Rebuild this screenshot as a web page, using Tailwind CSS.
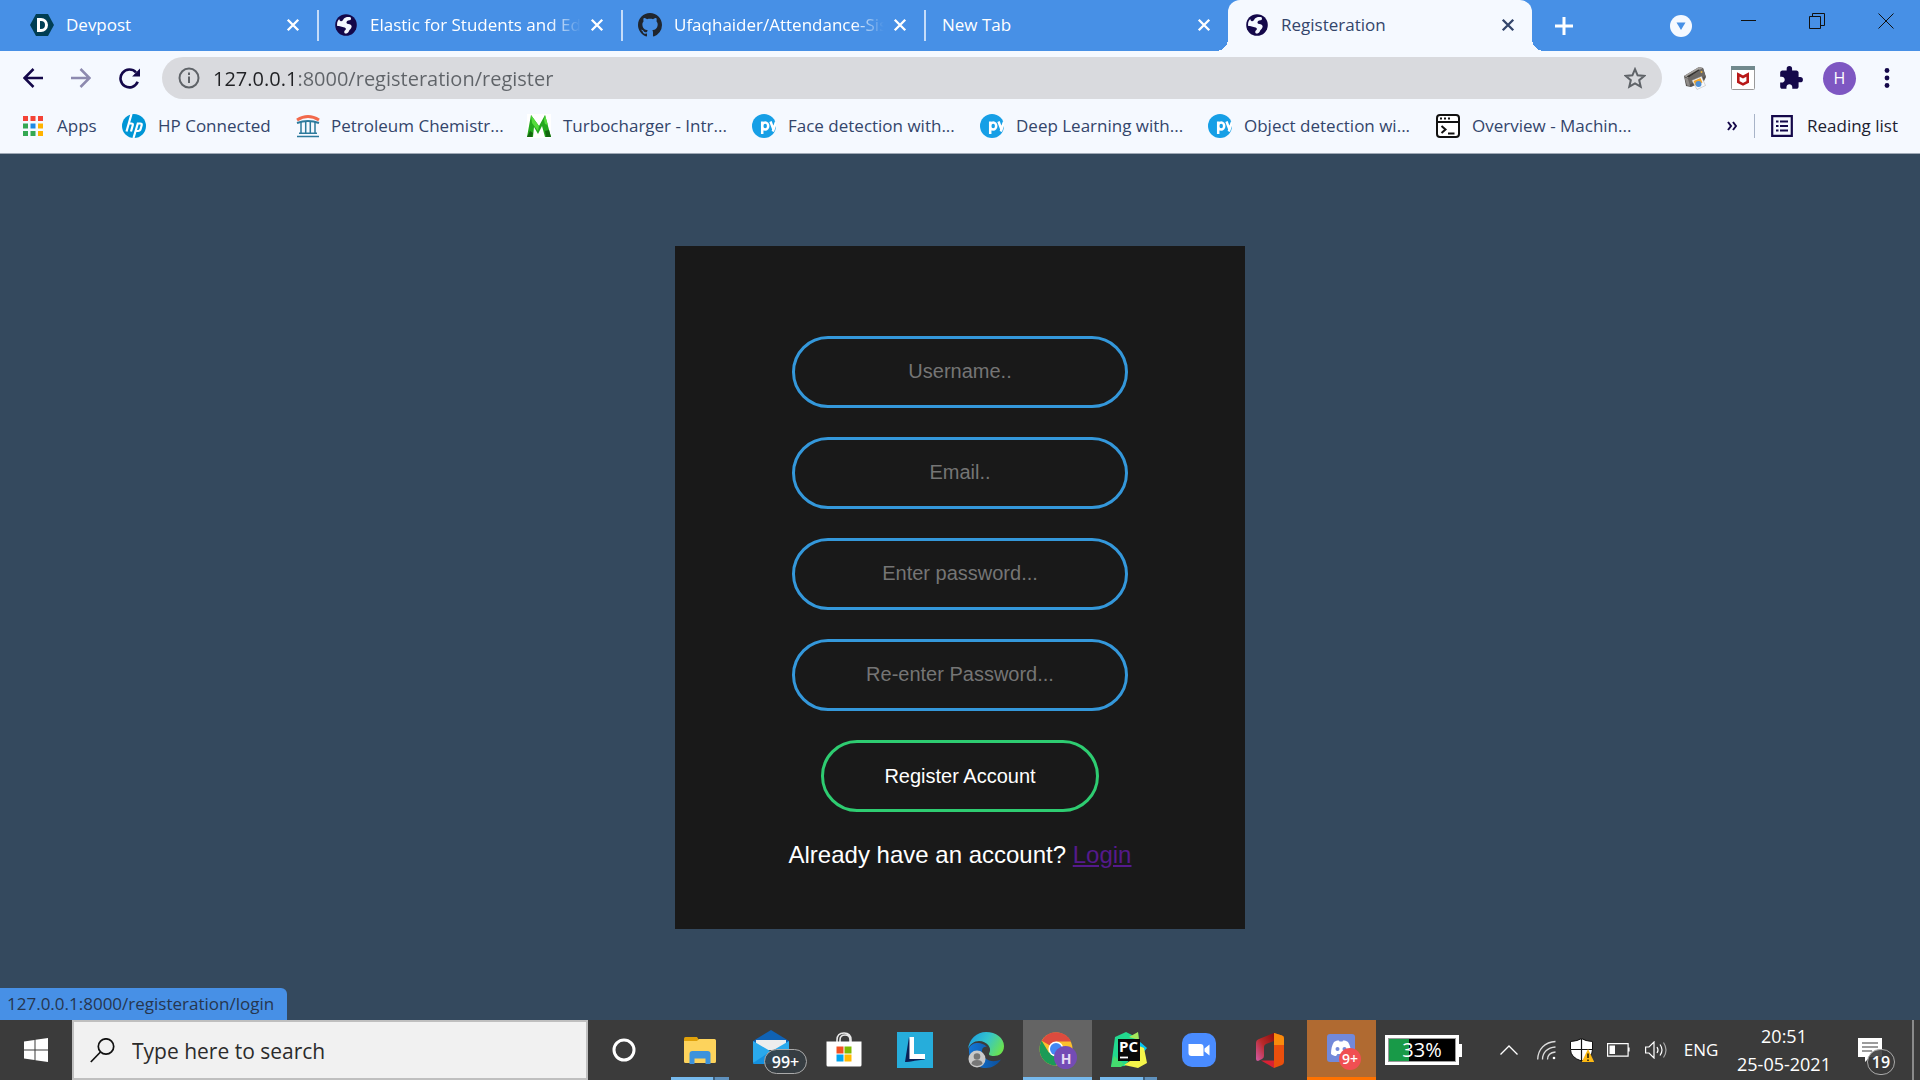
<!DOCTYPE html>
<html lang="en">
<head>
    <meta charset="utf-8" />
    <meta name="viewport" content="width=device-width, initial-scale=1" />
    <title>Registeration</title>
    <script src="https://cdn.jsdelivr.net/npm/@tailwindcss/browser@4"></script>
</head>
<body class="flex flex-col min-h-screen bg-[#34495e] font-['Open_Sans',sans-serif] text-base text-[#33456b]">

    <!-- Shared icons -->
    <svg class="hidden">
        <symbol id="i-close" viewBox="0 0 12 12"><path d="M1.500 1.500l9 9M10.500 1.500l-9 9" stroke="currentColor" stroke-width="2" fill="none" /></symbol>
        <symbol id="i-globe" viewBox="0 0 24 24">
            <circle cx="12" cy="12" r="10.800" fill="#14084a" />
            <path d="M10 5.500C11 4 14 3.500 16.500 4.200 17.500 5.500 17 7 15.500 7.300 13.500 7.500 12.200 8.500 12.500 10c.5 1.300 3 .8 4.200 1.800 1.500 1.200 1 2.600.2 3.700-.8 1-1.400 1.200-2 2.700-.6 1.500-1.800 2.300-3.900 2.300-1.200-.8-1-2.500.4-3.500 1-.8.600-2-.8-2.500C8 13.700 5.500 13 3.200 13c-.5-2.800.3-5.200 2-7 .3 1.300.8 2.500 2.200 2.200C8.800 7.900 9.200 6.600 10 5.500z" fill="#f5f9ff" />
        </symbol>
        <symbol id="i-py" viewBox="0 0 24 24">
            <circle cx="12" cy="12" r="12" fill="#169fe6" />
            <path d="M10.200 20V7.500M10.200 12a3 3.600 0 1 0 6 0 3 3.600 0 1 0-6 0M18.500 7.500l3 8M24 8l-3.200 9.500" stroke="#fff" stroke-width="2.500" fill="none" />
        </symbol>
    </svg>

    <!-- Tab strip -->
    <header class="flex h-[51px] bg-[#4790e6] pl-[15px] text-[17px] text-white">
        <div class="flex w-[304px] items-center border-r-2 border-[#b9d5f8] pb-[2px] pl-[15px] pr-3 [border-image:linear-gradient(transparent_20%,#c5dcf9_20%,#c5dcf9_80%,transparent_80%)_1]">
            <svg class="w-6 h-6 mr-3 shrink-0" viewBox="0 0 24 24">
                <path d="M6 1h12l6 11-6 11H6L0 12z" fill="#003e54" />
                <path d="M8.500 6.500v11h2.500a5.500 5.500 0 0 0 0-11z" fill="none" stroke="#fff" stroke-width="3" />
            </svg>
            <a href="#" class="flex-1 overflow-hidden whitespace-nowrap">Devpost</a>
            <button aria-label="Close tab" class="grid place-items-center w-6 h-6"><svg class="w-[14px] h-[14px]"><use href="#i-close" /></svg></button>
        </div>
        <div class="flex w-[304px] items-center border-r-2 border-[#b9d5f8] pb-[2px] pl-[15px] pr-3 [border-image:linear-gradient(transparent_20%,#c5dcf9_20%,#c5dcf9_80%,transparent_80%)_1]">
            <svg class="w-6 h-6 mr-3 shrink-0"><use href="#i-globe" /></svg>
            <a href="#" class="flex-1 overflow-hidden whitespace-nowrap mr-1 [mask-image:linear-gradient(to_right,black_85%,transparent)]">Elastic for Students and Educators</a>
            <button aria-label="Close tab" class="grid place-items-center w-6 h-6"><svg class="w-[14px] h-[14px]"><use href="#i-close" /></svg></button>
        </div>
        <div class="flex w-[303px] items-center border-r-2 border-[#b9d5f8] pb-[2px] pl-[15px] pr-3 [border-image:linear-gradient(transparent_20%,#c5dcf9_20%,#c5dcf9_80%,transparent_80%)_1]">
            <svg class="w-6 h-6 mr-3 shrink-0" viewBox="0 0 16 16"><path fill="#20262e" d="M8 0C3.580 0 0 3.580 0 8c0 3.540 2.290 6.530 5.470 7.590.4.070.55-.17.55-.38 0-.19-.01-.82-.01-1.490-2.010.37-2.530-.49-2.690-.94-.09-.23-.48-.94-.82-1.130-.28-.15-.68-.52-.01-.53.63-.01 1.080.58 1.230.82.72 1.210 1.870.87 2.330.66.07-.52.28-.87.51-1.070-1.780-.2-3.640-.89-3.640-3.950 0-.87.31-1.590.82-2.150-.08-.2-.36-1.020.08-2.120 0 0 .67-.21 2.200.82.64-.18 1.320-.27 2-.27s1.360.09 2 .27c1.530-1.040 2.200-.82 2.200-.82.44 1.100.16 1.920.08 2.120.51.56.82 1.270.82 2.150 0 3.070-1.870 3.750-3.650 3.950.29.25.54.73.54 1.480 0 1.070-.01 1.930-.01 2.200 0 .21.15.46.55.38A8.010 8.010 0 0 0 16 8c0-4.420-3.580-8-8-8z" /></svg>
            <a href="#" class="flex-1 overflow-hidden whitespace-nowrap mr-1 [mask-image:linear-gradient(to_right,black_85%,transparent)]">Ufaqhaider/Attendance-Sistem</a>
            <button aria-label="Close tab" class="grid place-items-center w-6 h-6"><svg class="w-[14px] h-[14px]"><use href="#i-close" /></svg></button>
        </div>
        <div class="flex w-[302px] items-center pb-[2px] pl-4 pr-3">
            <a href="#" class="flex-1 whitespace-nowrap">New Tab</a>
            <button aria-label="Close tab" class="grid place-items-center w-6 h-6"><svg class="w-[14px] h-[14px]"><use href="#i-close" /></svg></button>
        </div>
        <div class="relative flex w-[304px] items-center rounded-t-xl bg-[#f5f9ff] pb-[2px] pl-[17px] pr-3 text-[#33456b]">
            <span class="absolute bottom-0 -left-3 w-3 h-3 bg-[radial-gradient(circle_at_0_0,transparent_12px,#f5f9ff_12px)]"></span>
            <span class="absolute bottom-0 -right-3 w-3 h-3 bg-[radial-gradient(circle_at_100%_0,transparent_12px,#f5f9ff_12px)]"></span>
            <svg class="w-6 h-6 mr-3 shrink-0"><use href="#i-globe" /></svg>
            <a href="#" class="flex-1 whitespace-nowrap">Registeration</a>
            <button aria-label="Close tab" class="grid place-items-center w-6 h-6"><svg class="w-[14px] h-[14px]"><use href="#i-close" /></svg></button>
        </div>
        <button aria-label="New tab" class="ml-[18px] grid w-7 place-items-center"><svg class="w-[18px] h-[18px]" viewBox="0 0 18 18"><path d="M9 0v18M0 9h18" stroke="#fff" stroke-width="3" /></svg></button>
        <div class="ml-auto flex">
            <button aria-label="Search tabs" class="grid w-16 place-items-center"><svg class="w-[22px] h-[22px]" viewBox="0 0 22 22"><circle cx="11" cy="11" r="11" fill="#f5f9ff" /><path d="M6.500 7.500h9L11 15z" fill="#4790e6" /></svg></button>
            <button aria-label="Minimize" class="grid h-[42px] w-[69px] place-items-center"><svg class="w-4 h-4" viewBox="0 0 16 16"><path d="M1 7.500h15" stroke="#111" /></svg></button>
            <button aria-label="Restore" class="grid h-[42px] w-[69px] place-items-center"><svg class="w-4 h-4" viewBox="0 0 16 16"><path d="M.5 3.500h11v12H.5zM3.500 3.500v-3h12v12h-4" fill="none" stroke="#111" /></svg></button>
            <button aria-label="Close" class="grid h-[42px] w-[69px] place-items-center"><svg class="w-4 h-4" viewBox="0 0 16 16"><path d="M.5.5l15 15M15.500.5l-15 15" stroke="#111" /></svg></button>
        </div>
    </header>

    <!-- Toolbar -->
    <nav class="flex items-center bg-[#f5f9ff] pt-[6px] pl-[9px] pr-[10px] text-[#14084a]">
        <button aria-label="Back" class="grid w-12 place-items-center"><svg class="w-5 h-5" viewBox="0 0 20 20"><path d="M20 10H2M10.500 1L1.500 10l9 9" fill="none" stroke="currentColor" stroke-width="2.500" /></svg></button>
        <button aria-label="Forward" class="grid w-12 place-items-center text-[#8d8aaf]"><svg class="w-5 h-5" viewBox="0 0 20 20"><path d="M0 10h18M9.500 1l9 9-9 9" fill="none" stroke="currentColor" stroke-width="2.500" /></svg></button>
        <button aria-label="Reload" class="grid w-12 place-items-center"><svg class="w-[21px] h-[21px]" viewBox="0 0 20 20"><path d="M17.800 13.200A8.500 8.500 0 1 1 16.200 4.200" fill="none" stroke="currentColor" stroke-width="2.500" /><path d="M20 .5V8h-7.500z" fill="currentColor" /></svg></button>
        <div class="ml-[9px] flex h-[42px] flex-1 items-center rounded-full bg-[#d9dade] pl-4 pr-4 text-[#5f6368]">
            <svg class="mr-[13px] w-[22px] h-[22px] shrink-0" viewBox="0 0 22 22"><circle cx="11" cy="11" r="9.500" fill="none" stroke="currentColor" stroke-width="2" /><path d="M11 9.500V16M11 5.500V8" stroke="currentColor" stroke-width="2" /></svg>
            <!-- host part of the address is darker than the path -->
            <input type="text" aria-label="Address" value="127.0.0.1:8000/registeration/register" class="h-8 flex-1 bg-[linear-gradient(to_right,#202124_84px,#5f6368_84px)] bg-clip-text text-xl text-transparent outline-none" />
            <button aria-label="Bookmark this tab"><svg class="w-[22px] h-[22px]" viewBox="0 0 22 22"><path d="M11 2.200l2.600 6.100 6.600.6-5 4.300 1.500 6.500-5.700-3.400-5.700 3.400 1.500-6.500-5-4.300 6.600-.6z" fill="none" stroke="currentColor" stroke-width="2" /></svg></button>
        </div>
        <div class="ml-[9px] flex items-center">
            <button aria-label="Printer extension" class="grid w-12 place-items-center">
                <svg class="w-6 h-6" viewBox="0 0 24 24"><path d="M1 10L16 1l4 1 3 9-2 4L8 21l-5-1z" fill="#55524f" /><path d="M1 10L16 1l4 1L5 12z" fill="#a5a29e" /><path d="M3.500 10.500L15.500 3.500l2 .5L6 11.500z" fill="#373532" /><path d="M5 12L20 2l2.500 8L6 19z" fill="#6b6865" /><path d="M1.500 11.500l3.500 1 2 7.500-3-.5z" fill="#8f8c89" /><path d="M9 14.500l9.500-4 4 9-8.500 4z" fill="#fafafa" stroke="#aaa" stroke-width=".5" /><path d="M10.500 15l7-3 2 4.500-7 3z" fill="#f0a52c" /><circle cx="15.500" cy="18" r="3" fill="#4d8fd6" /><circle cx="18.500" cy="6" r="1" fill="#e8b23d" /></svg>
            </button>
            <button aria-label="McAfee" class="grid w-12 place-items-center">
                <svg class="w-6 h-6" viewBox="0 0 24 24"><rect x=".5" y=".5" width="23" height="23" rx="1" fill="#fff" stroke="#9a9a9a" /><path d="M0 0h24v4H0z" fill="#71898d" /><path d="M7.300 8.500l4.700 2.500 4.700-2.500v7.500L12 18.300 7.300 16z" fill="none" stroke="#b81818" stroke-width="2.600" /><path d="M9 6.500h6L12 8.500z" fill="#fff" /></svg>
            </button>
            <button aria-label="Extensions" class="grid w-12 place-items-center">
                <svg class="w-[26px] h-[26px]" viewBox="0 0 24 24"><path fill="currentColor" d="M20.500 11H19V7c0-1.100-.9-2-2-2h-4V3.500a2.500 2.500 0 0 0-5 0V5H4c-1.100 0-1.990.9-1.990 2v3.800H3.500c1.490 0 2.700 1.210 2.700 2.700s-1.210 2.700-2.700 2.700H2V20c0 1.100.9 2 2 2h3.800v-1.500c0-1.490 1.210-2.700 2.700-2.700 1.490 0 2.700 1.210 2.700 2.700V22H17c1.100 0 2-.9 2-2v-4h1.500a2.500 2.500 0 0 0 0-5z" /></svg>
            </button>
            <button aria-label="Profile" class="mx-2 grid h-[33px] w-[33px] place-items-center rounded-full bg-[#7e57c2] text-base text-white">H</button>
            <button aria-label="Menu" class="grid w-[46px] place-items-center"><svg class="w-5 h-5" viewBox="0 0 20 20" fill="currentColor"><circle cx="10" cy="2.500" r="2.400" /><circle cx="10" cy="10" r="2.400" /><circle cx="10" cy="17.500" r="2.400" /></svg></button>
        </div>
    </nav>

    <!-- Bookmarks -->
    <nav class="flex h-[55px] items-center border-b border-[#9fa9b6] bg-[#f5f9ff] pl-[23px] pr-[22px] text-[17px] whitespace-nowrap">
        <a href="#" class="flex w-[99px] items-center gap-[14px]">
            <svg class="w-5 h-5 shrink-0" viewBox="0 0 20 20"><path d="M0 0h5v5H0zM7.500 0h5v5h-5zM15 0h5v5h-5z" fill="#f44336" /><path d="M0 7.500h5v5H0zM0 15h5v5H0zM7.500 15h5v5h-5z" fill="#34a853" /><path d="M7.500 7.500h5v5h-5z" fill="#1e88e5" /><path d="M15 7.500h5v5h-5zM15 15h5v5h-5z" fill="#ffb300" /></svg>
            Apps
        </a>
        <a href="#" class="flex w-[174px] items-center gap-3">
            <svg class="w-6 h-6 shrink-0" viewBox="0 0 24 24"><circle cx="12" cy="12" r="12" fill="#0096d6" /><path d="M9.500 0L4.500 17.500M6.800 9.500h2.500q2 0 1.400 2L9 17.500M11.500 24l4.300-14.500h2.400q2 0 1.400 2l-1 3.500q-.6 2-2.600 2h-2.500" fill="none" stroke="#fff" stroke-width="2.200" /></svg>
            HP Connected
        </a>
        <a href="#" class="flex w-[231px] items-center gap-[11px]">
            <svg class="w-6 h-6 shrink-0" viewBox="0 0 24 24"><path d="M1 6q11-7 22 0" fill="none" stroke="#f2694b" stroke-width="3" /><path d="M1 9q11-4 22 0" fill="none" stroke="#2c7a9c" stroke-width="2" /><path d="M5 8v11M9.700 7v12M14.300 7v12M19 8v11M3 19.300h18M1 22.500h22" fill="none" stroke="#2c7a9c" stroke-width="1.500" /></svg>
            Petroleum Chemistr...
        </a>
        <a href="#" class="flex w-[225px] items-center gap-3">
            <svg class="w-6 h-6 shrink-0" viewBox="0 0 24 24"><path d="M0 0h24v24H0z" fill="#fff" /><path d="M0 23L4 1l8 11 6-11 6 22h-6l-3-11-4 8-4-7-1 10z" fill="#24a81e" /><path d="M4 1l8 11-1 5-6-8zM18 1l3 10-3-1-1-4z" fill="#55dc3c" /><path d="M0 23l3-6 3 2-1 4zM18 17l4-1 2 7h-5z" fill="#14670f" /></svg>
            Turbocharger - Intr...
        </a>
        <a href="#" class="flex w-[228px] items-center gap-3"><svg class="w-6 h-6 shrink-0"><use href="#i-py" /></svg>Face detection with...</a>
        <a href="#" class="flex w-[228px] items-center gap-3"><svg class="w-6 h-6 shrink-0"><use href="#i-py" /></svg>Deep Learning with...</a>
        <a href="#" class="flex w-[228px] items-center gap-3"><svg class="w-6 h-6 shrink-0"><use href="#i-py" /></svg>Object detection wi...</a>
        <a href="#" class="flex items-center gap-3">
            <svg class="w-6 h-6 shrink-0" viewBox="0 0 24 24"><rect x="1" y="1" width="22" height="22" rx="3" fill="#fff" stroke="#111" stroke-width="2" /><path d="M1 8h22M5.500 12l4 3.500-4 3.500M12 19.500h6.500" fill="none" stroke="#111" stroke-width="2" /><path d="M4 4.500h2M8 4.500h2M12 4.500h2" stroke="#111" stroke-width="2" /></svg>
            Overview - Machin...
        </a>
        <button aria-label="More bookmarks" class="ml-auto grid w-9 h-6 place-items-center border-r border-[#a8b4c8] pr-[9px] text-[#14084a]"><svg class="w-[10px] h-[10px]" viewBox="0 0 10 10"><path d="M1 1l3 4-3 4M6 1l3 4-3 4" fill="none" stroke="currentColor" stroke-width="2" /></svg></button>
        <button class="ml-4 flex items-center gap-[14px] text-[#1c2030]">
            <svg class="w-[22px] h-[22px]" viewBox="0 0 22 22"><path d="M1.200 1.200h19.600v19.600H1.200z" fill="none" stroke="#14084a" stroke-width="2.200" /><path d="M5 6.500h2.500M5 11h2.500M5 15.500h2.500M9 6.500h8M9 11h8M9 15.500h8" stroke="#14084a" stroke-width="2.200" /></svg>
            Reading list
        </button>
    </nav>

    <!-- Register page -->
    <main class="relative flex flex-1 items-center justify-center font-['Liberation_Sans',Arial,sans-serif]">
        <form class="flex w-[570px] flex-col items-center gap-[29px] bg-[#191919] pt-[90px] pb-[60px]">
            <input type="text" aria-label="Username" placeholder="Username.." class="h-[72px] w-[336px] rounded-full border-3 border-[#3498db] bg-transparent text-center text-xl text-white placeholder:text-[#757575]" />
            <input type="email" aria-label="Email" placeholder="Email.." class="h-[72px] w-[336px] rounded-full border-3 border-[#3498db] bg-transparent text-center text-xl text-white placeholder:text-[#757575]" />
            <input type="password" aria-label="Password" placeholder="Enter password..." class="h-[72px] w-[336px] rounded-full border-3 border-[#3498db] bg-transparent text-center text-xl text-white placeholder:text-[#757575]" />
            <input type="password" aria-label="Re-enter password" placeholder="Re-enter Password..." class="h-[72px] w-[336px] rounded-full border-3 border-[#3498db] bg-transparent text-center text-xl text-white placeholder:text-[#757575]" />
            <button type="submit" class="h-[72px] w-[278px] rounded-full border-3 border-[#2ecc71] text-xl text-white">Register Account</button>
            <p class="text-2xl leading-7 text-white">Already have an account? <a href="#" class="text-[#551a8b] underline">Login</a></p>
        </form>
        <div class="absolute bottom-0 left-0 flex h-8 items-center rounded-tr-md bg-[#4790e6] pl-[7px] pr-[13px] font-['Open_Sans',sans-serif] text-[17px] text-[#26364f]">127.0.0.1:8000/registeration/login</div>
    </main>

    <!-- Taskbar -->
    <footer class="flex h-[60px] bg-[#3b3b3b] text-white">
        <button aria-label="Start" class="grid w-[72px] place-items-center"><svg class="w-6 h-6" viewBox="0 0 24 24" fill="#fff"><path d="M0 3.500L10.500 2v9.500H0zM11.500 1.800L24 0v11.500H11.500zM0 12.500h10.500V22L0 20.500zM11.500 12.500H24V24l-12.500-1.800z" /></svg></button>
        <label class="flex w-[516px] items-center gap-[17px] border-2 border-[#bfbfbf] bg-[#f1f1f1] pl-4 text-black">
            <svg class="w-[25px] h-[25px] shrink-0" viewBox="0 0 25 25"><circle cx="16" cy="8.500" r="7.700" fill="none" stroke="#111" stroke-width="1.700" /><path d="M10.500 14L.8 24" stroke="#111" stroke-width="1.700" /></svg>
            <input type="text" aria-label="Search" placeholder="Type here to search" class="w-full bg-transparent pt-1 text-[21px] outline-none placeholder:text-[#2b2b2b]" />
        </label>
        <button aria-label="Cortana" class="grid w-[72px] place-items-center"><svg class="w-6 h-6" viewBox="0 0 24 24"><circle cx="12" cy="12" r="10" fill="none" stroke="#fff" stroke-width="3" /></svg></button>
        <div class="ml-2 flex gap-[2px]">
            <button aria-label="File Explorer" class="relative grid w-[69px] place-items-center pr-[5px]">
                <svg class="w-8 h-[27px]" viewBox="0 0 32 27"><path d="M0 1.500Q0 0 1.500 0H13l2 3v4H0z" fill="#e0a10a" /><path d="M0 4h13l2-2h15.500Q32 2 32 3.500v21q0 1.500-1.500 1.500h-29Q0 26 0 24.500z" fill="#fdd35c" /><path d="M5.500 27V17q0-3 3-3h15q3 0 3 3v10h-5v-5.500h-11V27z" fill="#3c92dd" /></svg>
                <span class="absolute bottom-0 left-[3px] flex h-[3px] w-[58px] bg-[#5f91bd]"><span class="w-11 border-r-2 border-[#3f5f7c] bg-[#76b9ed]"></span></span>
            </button>
            <button aria-label="Mail" class="relative grid w-[69px] place-items-center pr-[5px] pb-[6px]">
                <svg class="w-9 h-[34px]" viewBox="0 0 36 34"><path d="M0 11L18 0l18 11v4H0z" fill="#0f62b5" /><path d="M3 10h30v10H3z" fill="#ededed" /><path d="M0 11l18 10.500L36 11v21q0 2-2 2H2q-2 0-2-2z" fill="#2aa9ec" /><path d="M0 33l18-12 18 12q0 1-2 1H2q-2 0-2-1z" fill="#1490df" /></svg>
                <span class="absolute left-[25px] top-[29px] grid h-[25px] w-[43px] place-items-center rounded-full border border-[#aaa] bg-[#363e44]/90 text-base font-semibold">99+</span>
            </button>
            <button aria-label="Store" class="grid w-[69px] place-items-center pb-[2px] pr-[2px]">
                <svg class="w-9 h-[35px]" viewBox="0 0 36 35"><path d="M11 10V8q0-7 7-7t7 7v2M14 10V8q0-5 5-5t5 5v2" fill="none" stroke="#e8e8e8" stroke-width="1.600" /><path d="M.5 9.500h35V33q0 1.500-1.500 1.500H2Q.5 34.500.5 33z" fill="#fff" /><path d="M10.500 14.500h7v7h-7z" fill="#f25022" /><path d="M18.500 14.500h7v7h-7z" fill="#7fba00" /><path d="M10.500 22.500h7v7h-7z" fill="#00a4ef" /><path d="M18.500 22.500h7v7h-7z" fill="#ffb900" /></svg>
            </button>
            <button aria-label="Lenovo" class="grid w-[69px] place-items-center pr-[2px]">
                <svg class="w-9 h-9" viewBox="0 0 36 36"><path d="M0 0h36v36H0z" fill="#26addb" /><path d="M12 5L8 30l9-1V22z" fill="#0b1f55" /><path d="M8 30l5-3.500h15l-.5 1z" fill="#0b1f55" /><path d="M12.500 5h4.500v17h11v5H12.500z" fill="#fff" /></svg>
            </button>
            <button aria-label="Edge" class="grid w-[69px] place-items-center pr-[2px]">
                <svg class="w-9 h-9" viewBox="0 0 36 36">
                    <defs>
                        <linearGradient id="edgeTop" x1="0" x2="1" y1=".2" y2=".6"><stop offset="0" stop-color="#1a9de2" /><stop offset=".5" stop-color="#35c5cb" /><stop offset="1" stop-color="#6be24f" /></linearGradient>
                        <linearGradient id="edgeSide" x1="0" x2="1"><stop offset="0" stop-color="#1476d6" /><stop offset="1" stop-color="#0c4f9a" /></linearGradient>
                    </defs>
                    <path d="M1 16C5 8 16 11 19 15c-5-1-6 4-4 8 3 6 10 8 18 4.500C29 33 24 36 18 36 8 36 0 28 1 16z" fill="url(#edgeSide)" />
                    <path d="M0 17C1 7 9 0 18 0c10 0 18 6 18 14 0 7-5 10-10 10-4 0-6-1-4.500-3.500C24 16 19 9 11 9 6 9 2 12 0 17z" fill="url(#edgeTop)" />
                    <circle cx="9" cy="27" r="8.500" fill="#c9c9c9" /><circle cx="9" cy="24.500" r="3.300" fill="#777" /><path d="M3.500 32q0-4 5.500-4t5.500 4q-5.500 4-11 0z" fill="#777" />
                </svg>
            </button>
            <button aria-label="Chrome" class="relative grid w-[69px] place-items-center bg-[#646464]">
                <svg class="w-[38px] h-[38px]" viewBox="0 0 38 38"><circle cx="17" cy="18" r="16.500" fill="#fbc02d" /><path d="M17 18L2.700 9.800A16.500 16.500 0 0 1 32 10.500L17 10.500z" fill="#dd4b3e" /><path d="M17 18L9.800 21.500 2.700 9.800A16.500 16.500 0 0 0 17 34.500l7-12z" fill="#1b9b57" /><circle cx="17" cy="18" r="7.600" fill="#fff" /><circle cx="17" cy="18" r="6" fill="#4387f4" /><circle cx="26.500" cy="26.500" r="11.500" fill="#744cb5" /></svg>
                <span class="absolute left-[31px] top-[27px] grid w-6 h-6 place-items-center text-sm font-bold text-[#e6dcf5]">H</span>
                <span class="absolute bottom-0 left-0 h-[3px] w-full bg-[#76b9ed]"></span>
            </button>
            <button aria-label="PyCharm" class="relative grid w-[69px] place-items-center">
                <svg class="w-9 h-9" viewBox="0 0 36 36"><path d="M4 5L15 0l10 5 2-5 1 14L14 34 0 35z" fill="#22d88f" /><path d="M18 5l9-5 1 8z" fill="#a4e85a" /><path d="M28 9l8 7-4 5-5-3z" fill="#07c3f2" /><path d="M28 14l5 2 3 15-9 5-14-3 12-8z" fill="#f5f54a" /><path d="M0 35l3-11 10 8-3 3z" fill="#45dd6f" /><path d="M7 7h22v22H7z" fill="#090909" /><path d="M9 25.500h8" stroke="#fff" stroke-width="1.800" /></svg>
                <span class="absolute left-[25px] top-[18px] text-[15px] leading-[17px] font-bold">PC</span>
                <span class="absolute bottom-0 left-[6px] flex h-[3px] w-[57px] bg-[#5f91bd]"><span class="w-[45px] border-r-2 border-[#3f5f7c] bg-[#76b9ed]"></span></span>
            </button>
            <button aria-label="Zoom" class="grid w-[69px] place-items-center pr-[2px]">
                <svg class="w-[34px] h-[34px]" viewBox="0 0 34 34"><rect width="34" height="34" rx="10" fill="#4a8cff" /><path d="M6.500 11h12q3 0 3 3v9h-12q-3 0-3-3zM22.500 15.500l5-4v11l-5-4z" fill="#fff" /></svg>
            </button>
            <button aria-label="Office" class="grid w-[69px] place-items-center pr-[2px]">
                <svg class="w-7 h-[35px]" viewBox="0 0 28 35">
                    <defs><linearGradient id="office" x1="1" x2="0" y1="0" y2="1"><stop offset="0" stop-color="#8c0f0f" /><stop offset=".5" stop-color="#b92a2a" /><stop offset="1" stop-color="#d45ba8" /></linearGradient></defs>
                    <path d="M18 0v8l-8 3q-2 1-2 3v9q0 2-2 3l-4 2q-2 0-2-2V10q0-3 3-4z" fill="url(#office)" /><path d="M18 0l8 2.500q2 .7 2 3v23.500q0 2-2 3L18 35z" fill="#ea4f0c" /><path d="M18 0l8 2.500q2 .7 2 3V12H18z" fill="#f98b0c" /><path d="M5 27.500h13V35z" fill="#d92133" />
                </svg>
            </button>
            <button aria-label="Discord" class="relative grid w-[69px] place-items-center border-b-3 border-[#ff7200] bg-[#b06a31] pr-[2px]">
                <svg class="w-7 h-[29px]" viewBox="0 0 28 29"><rect width="28" height="28" rx="3" fill="#7289da" /><path d="M20 26h8v3z" fill="#7289da" /><path d="M4 20c0-5 1-9 3-12 2-1.300 3-1.500 5-1.500l.5 1h3l.5-1c2 0 3 .2 5 1.500 2 3 3 7 3 12-2 1.500-3.500 2-5 2l-1.500-2h-7L9 22c-1.500 0-3-.5-5-2z" fill="#fff" /><circle cx="10.500" cy="15" r="2" fill="#7289da" /><circle cx="17.500" cy="15" r="2" fill="#7289da" /></svg>
                <span class="absolute left-[32px] top-[28px] grid h-[22px] w-[22px] place-items-center rounded-full bg-[#f04f52] text-sm font-semibold">9+</span>
            </button>
        </div>
        <div class="ml-[9px] flex items-center">
            <div class="grid h-[30px] w-[74px] place-items-center border-3 border-white bg-[linear-gradient(to_right,#189a48_31%,black_31%)] text-xl leading-6 outline-1 -outline-offset-4 outline-[#9a9a9a]">33%</div>
            <span class="h-[13px] w-[3px] bg-white"></span>
        </div>
        <div class="ml-auto flex items-center">
            <button aria-label="Show hidden icons" class="grid w-9 place-items-center"><svg class="w-[18px] h-[10px]" viewBox="0 0 18 10"><path d="M.5 9.500L9 1l8.500 8.500" fill="none" stroke="#fff" stroke-width="1.300" /></svg></button>
            <button aria-label="Network" class="grid w-[38px] place-items-center"><svg class="w-[19px] h-5" viewBox="0 0 19 20" fill="none" stroke="#ddd" stroke-width="1.300"><path d="M.7 19.500C1 9 8 2 18.500 1.500M5.500 19.500c0-7 5-12 13-12.500M10.500 19.500c0-4 3-7 8-7.500" /><circle cx="17" cy="18" r="1.300" fill="#fff" stroke="none" /></svg></button>
            <button aria-label="Security" class="grid w-[34px] place-items-center"><svg class="w-6 h-6" viewBox="0 0 24 24"><path d="M11.500.5Q15 3 22.500 3.500v8q0 8-11 11.500Q.5 19.500.5 11.500v-8Q8 3 11.500.5z" fill="#fff" stroke="#111" /><path d="M11.500 1v22M1 11.500h22" stroke="#111" stroke-width="1.200" /><path d="M18 11l6.500 13.500h-13z" fill="#fdb913" /><path d="M18 15.500v4.500M18 21.500v1.500" stroke="#111" stroke-width="1.400" /></svg></button>
            <button aria-label="Battery" class="grid w-[39px] place-items-center"><svg class="w-[23px] h-[14px]" viewBox="0 0 23 14"><path d="M.6.6h20.500v12.500H.6zM22 4.500v4" fill="none" stroke="#fff" stroke-width="1.200" /><path d="M2.500 2.500H8v8.500H2.500z" fill="#fff" /></svg></button>
            <button aria-label="Volume" class="grid w-9 place-items-center"><svg class="w-[23px] h-[18px]" viewBox="0 0 23 18" fill="none" stroke="#fff" stroke-width="1.200"><path d="M.6 6H4l5-5v16l-5-5H.6z" /><path d="M12 6q2 3 0 6M15 3.500q4 5.500 0 11" /><path d="M18.500 1.500q5 7.500 0 15" stroke="#aaa" /></svg></button>
            <button class="w-[54px] text-center text-[17px]">ENG</button>
            <time class="w-28 text-center text-[18px] leading-7">20:51<br />25-05-2021</time>
            <button aria-label="Notifications" class="relative ml-[18px] mr-[17px] h-[60px] w-[37px]">
                <svg class="absolute left-0 top-[18px] h-6 w-6" viewBox="0 0 24 24"><path d="M0 0h24v19H12l-5 5v-5H0z" fill="#fff" /><path d="M4 5h16M4 9h16M4 13h10" stroke="#3b3b3b" stroke-width="1.200" /></svg>
                <span class="absolute left-[9px] top-[29px] grid h-[26px] w-7 place-items-center rounded-full border border-[#aaa] bg-[#3b3b3b]/90 text-base font-semibold">19</span>
            </button>
            <button aria-label="Show desktop" class="h-[60px] w-[8px] border-l-2 border-[#8a8a8a]"></button>
        </div>
    </footer>
</body>
</html>
